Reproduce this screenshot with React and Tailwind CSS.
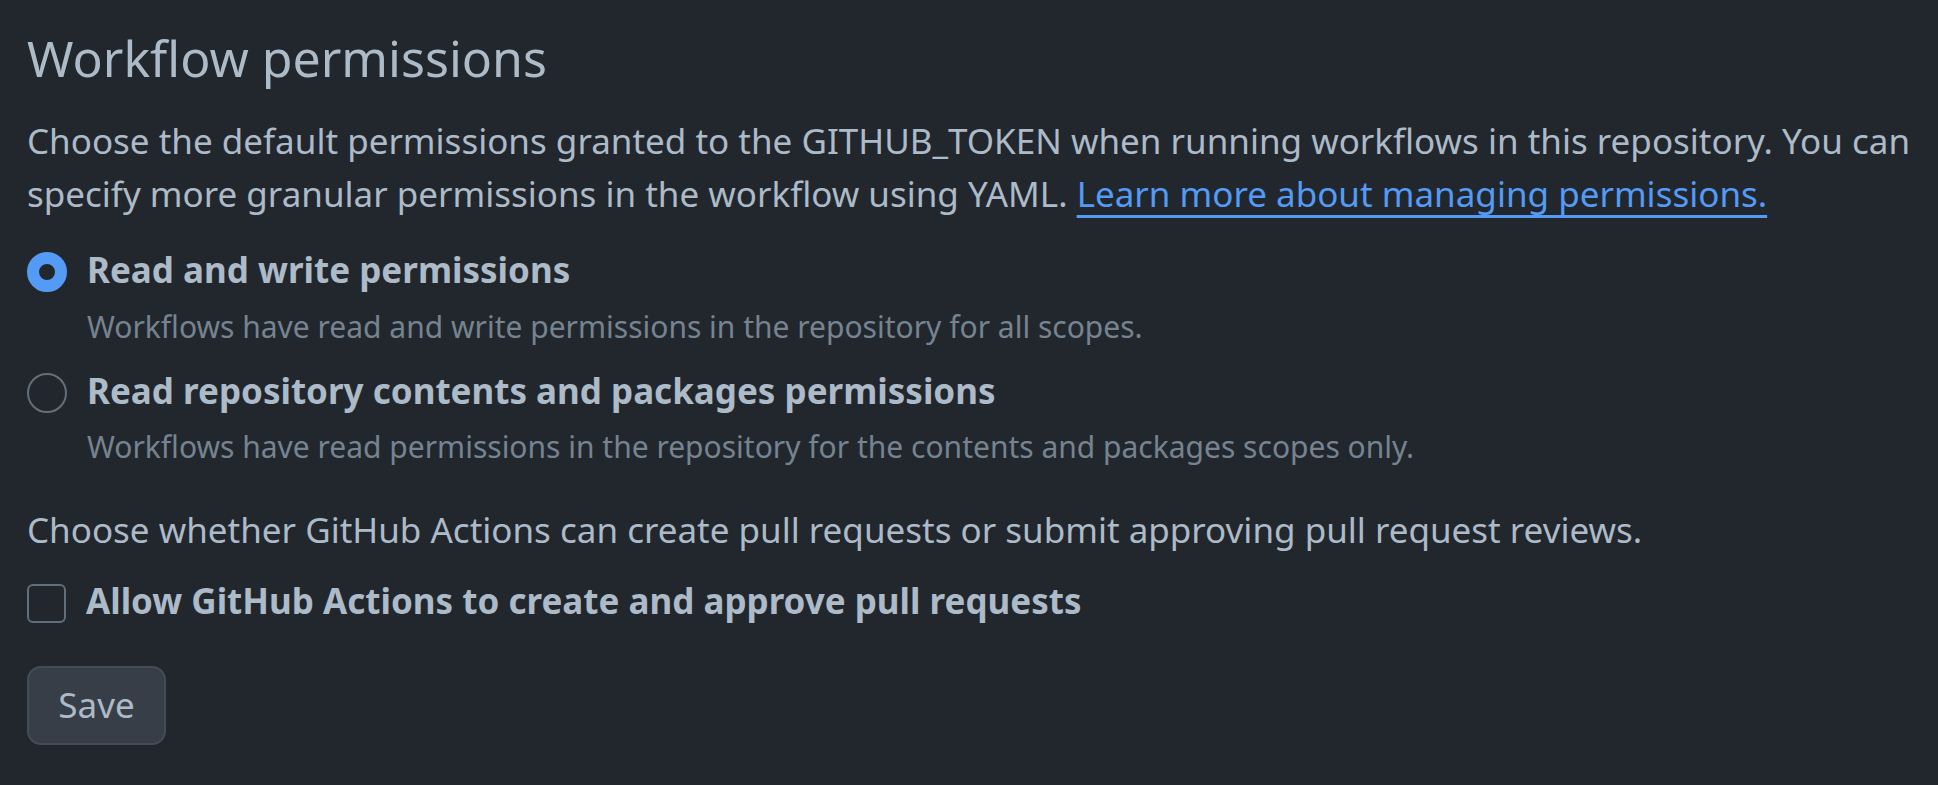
import React, { useState } from "react";

const font = { fontFamily: '"Noto Sans", "Liberation Sans", sans-serif' };

const RadioOption = ({ checked, label, caption, onSelect, className = "" }) => (
  <div className={`flex gap-[20px] ${className}`}>
    <div className="flex h-[52.5px] shrink-0 items-center pt-[4px]">
      <button
        type="button"
        onClick={onSelect}
        className={
          checked
            ? "box-border h-[40px] w-[40px] rounded-full border-[12px] border-[#539bf5] bg-[#22272e]"
            : "box-border h-[40px] w-[40px] rounded-full border-[2.5px] border-[#636e7b] bg-transparent"
        }
      />
    </div>
    <div>
      <div
        className="cursor-pointer text-[35px] font-bold leading-[52.5px] text-[#adbac7]"
        onClick={onSelect}
      >
        {label}
      </div>
      <div className="mt-[7px] text-[30px] leading-[45px] text-[#768390]">{caption}</div>
    </div>
  </div>
);

export default function App() {
  const [perm, setPerm] = useState("write");
  const [allowPr, setAllowPr] = useState(false);

  return (
    <div className="min-h-[785px] w-full bg-[#22272e] pl-[27px] pr-[20px] text-[#adbac7]" style={font}>
      <h2 className="pt-[28px] text-[50px] font-normal leading-[60px] text-[#adbac7]">
        Workflow permissions
      </h2>

      <p className="mt-[27px] text-[35px] leading-[52.5px]">
        Choose the default permissions granted to the GITHUB_TOKEN when running workflows in this
        repository. You can specify more granular permissions in the workflow using YAML.{" "}
        <a
          href="#"
          className="text-[#539bf5] underline decoration-[3px] underline-offset-[8px] [text-decoration-skip-ink:none]"
        >
          Learn more about managing permissions.
        </a>
      </p>

      <RadioOption
        className="mt-[24px]"
        checked={perm === "write"}
        onSelect={() => setPerm("write")}
        label="Read and write permissions"
        caption="Workflows have read and write permissions in the repository for all scopes."
      />
      <RadioOption
        className="mt-[16px]"
        checked={perm === "read"}
        onSelect={() => setPerm("read")}
        label="Read repository contents and packages permissions"
        caption="Workflows have read permissions in the repository for the contents and packages scopes only."
      />

      <p className="mt-[35px] text-[35px] leading-[52.5px]">
        Choose whether GitHub Actions can create pull requests or submit approving pull request reviews.
      </p>

      <div className="mt-[18px] flex gap-[20px]">
        <div className="flex h-[52.5px] shrink-0 items-center pt-[5px]">
          <button
            type="button"
            onClick={() => setAllowPr(!allowPr)}
            className={`box-border h-[39px] w-[39px] rounded-[6px] border-[2.5px] ${
              allowPr ? "border-[#539bf5] bg-[#539bf5]" : "border-[#636e7b] bg-transparent"
            }`}
          />
        </div>
        <div
          className="cursor-pointer text-[35px] font-bold leading-[52.5px]"
          onClick={() => setAllowPr(!allowPr)}
        >
          Allow GitHub Actions to create and approve pull requests
        </div>
      </div>

      <button
        type="button"
        className="mt-[39px] box-border h-[79px] w-[139px] rounded-[14px] border-[2.5px] border-[#444c56] bg-[#373e47] text-[35px] leading-[52.5px] text-[#adbac7]"
      >
        Save
      </button>
    </div>
  );
}
